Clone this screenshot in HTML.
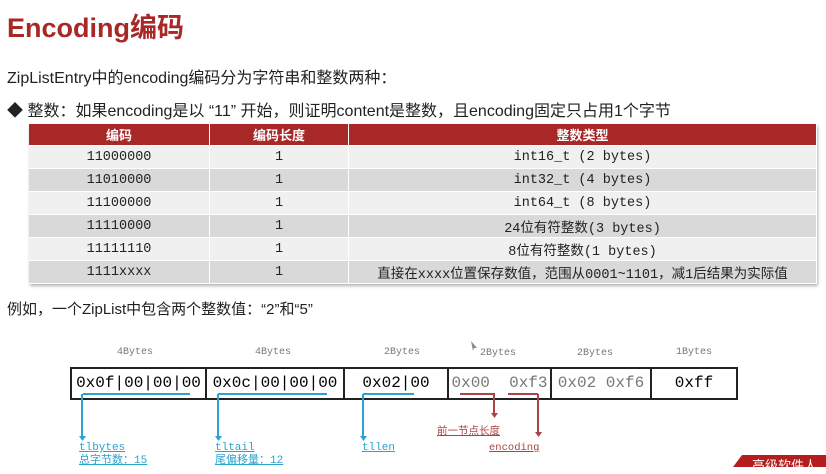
<!DOCTYPE html>
<html><head><meta charset="utf-8"><style>
body{margin:0;width:826px;height:467px;background:#fff;position:relative;overflow:hidden;font-family:"Liberation Sans","Noto Sans CJK SC",sans-serif;}
.a{position:absolute;white-space:nowrap}
.mono{font-family:"Liberation Mono","Noto Sans CJK SC",monospace}
table{position:absolute;left:29px;top:124px;width:788px;border-collapse:collapse;box-shadow:1px 2px 3px rgba(0,0,0,.3)}
td,th{height:22px;padding:0;text-align:center;font-size:13.5px;border-right:1px solid #fff;border-bottom:1px solid #fff;color:#222}
th{background:#a82828;color:#fff;font-size:13px;height:21px}
tr:nth-child(even) td{background:#f0f0f0}
tr:nth-child(odd) td{background:#d9d9d9}
.box{position:absolute;top:367px;height:33px;border:2px solid #222;box-sizing:border-box;font-family:"Liberation Mono",monospace;font-size:16px;line-height:29px;text-align:center}
.lb{position:absolute;font-family:"Liberation Mono",monospace;font-size:10px;color:#777}
.bl{color:#2ba3d0;font-size:11px;text-decoration:underline;font-family:"Liberation Mono","Noto Sans CJK SC",monospace;line-height:13px}
.rd{color:#a84444;font-size:10.5px;text-decoration:underline;font-family:"Liberation Mono","Noto Sans CJK SC",monospace}
</style></head><body>
<div class="a" style="left:7px;top:6px;font-size:27px;font-weight:bold;color:#a82828">Encoding编码</div>
<div class="a" style="left:7px;top:64px;font-size:16px;color:#222">ZipListEntry中的encoding编码分为字符串和整数两种：</div>
<div class="a" style="left:7px;top:97px;font-size:16px;color:#222">◆ 整数：如果encoding是以 “11” 开始，则证明content是整数，且encoding固定只占用1个字节</div>
<table>
<tr><th style="width:180px">编码</th><th style="width:138px">编码长度</th><th>整数类型</th></tr>
<tr class="mono"><td>11000000</td><td>1</td><td>int16_t (2 bytes)</td></tr>
<tr class="mono"><td>11010000</td><td>1</td><td>int32_t (4 bytes)</td></tr>
<tr class="mono"><td>11100000</td><td>1</td><td>int64_t (8 bytes)</td></tr>
<tr class="mono"><td>11110000</td><td>1</td><td>24位有符整数(3 bytes)</td></tr>
<tr class="mono"><td>11111110</td><td>1</td><td>8位有符整数(1 bytes)</td></tr>
<tr class="mono"><td>1111xxxx</td><td>1</td><td>直接在xxxx位置保存数值，范围从0001~1101，减1后结果为实际值</td></tr>
</table>
<div class="a" style="left:7px;top:298px;font-size:15px;color:#222">例如，一个ZipList中包含两个整数值：“2”和“5”</div>
<div class="lb" style="left:117px;top:347px">4Bytes</div>
<div class="lb" style="left:255px;top:347px">4Bytes</div>
<div class="lb" style="left:384px;top:347px">2Bytes</div>
<div class="lb" style="left:480px;top:348px">2Bytes</div>
<div class="lb" style="left:577px;top:348px">2Bytes</div>
<div class="lb" style="left:676px;top:347px">1Bytes</div>
<div class="box" style="left:70px;width:137px">0x0f|00|00|00</div>
<div class="box" style="left:205px;width:140px">0x0c|00|00|00</div>
<div class="box" style="left:343px;width:106px">0x02|00</div>
<div class="box" style="left:447px;width:105px;color:#777">0x00&nbsp;&nbsp;0xf3</div>
<div class="box" style="left:550px;width:102px;color:#777">0x02 0xf6</div>
<div class="box" style="left:650px;width:88px">0xff</div>
<svg class="a" style="left:0;top:0" width="826" height="467">
<g stroke="#2ba3d0" stroke-width="2" fill="none"><path d="M83 394H190M82 394V437"/><path d="M218 394H327M218 394V437"/><path d="M363 394H414M363 394V437"/></g>
<g fill="#2ba3d0"><path d="M79 436h7l-3.5 5z"/><path d="M215 436h7l-3.5 5z"/><path d="M360 436h7l-3.5 5z"/></g>
<g stroke="#a84444" stroke-width="2" fill="none"><path d="M460 394H495M494 394V413"/><path d="M508 394H538M538 394V432"/></g>
<g fill="#a84444"><path d="M491 413h7l-3.5 5z"/><path d="M535 432h7l-3.5 5z"/></g>
<path d="M471 341l6 7-3 0-1 3z" fill="#888"/>
<path d="M733 467L742 455H826V467Z" fill="#b41e1e"/>
</svg>
<div class="a bl" style="left:79px;top:442px">tlbytes<br>总字节数：15</div>
<div class="a bl" style="left:215px;top:442px">tltail<br>尾偏移量：12</div>
<div class="a bl" style="left:362px;top:442px">tllen</div>
<div class="a rd" style="left:437px;top:423px">前一节点长度</div>
<div class="a rd" style="left:489px;top:442px">encoding</div>
<div class="a" style="left:752px;top:455px;font-size:13px;color:#fff">高级软件人</div>
</body></html>
